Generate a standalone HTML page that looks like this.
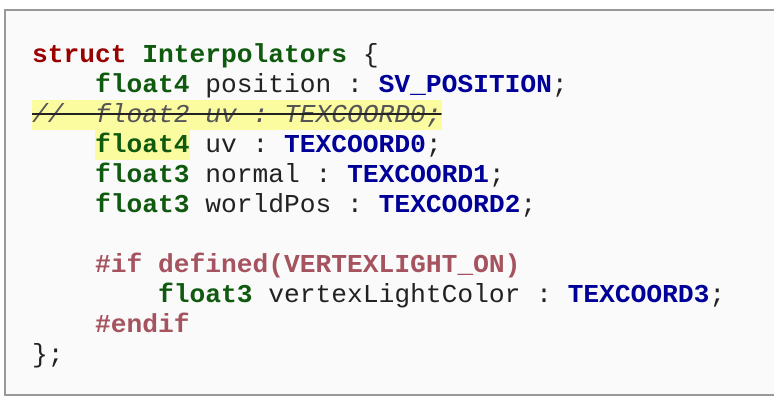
<!DOCTYPE html>
<html><head><meta charset="utf-8"><style>
html,body{margin:0;padding:0;background:#fff;width:774px;height:406px;overflow:hidden}
.box{position:absolute;left:4px;top:9px;width:790px;height:383px;border:2px solid #999;background:#fafafa}
pre{position:absolute;left:32px;top:40px;margin:0;font-family:"Liberation Mono",monospace;font-size:26.25px;line-height:30px;color:#222}
.k{color:#990000;font-weight:bold}
.t{color:#0f5a0f;font-weight:bold}
.s{color:#000099;font-weight:bold}
.p{color:#a5535f;font-weight:bold}
.c{color:#555;font-style:italic;text-decoration:line-through;text-decoration-color:#222;background:#fbfba0}
.h{background:#fbfba0}
</style></head><body>
<div class="box"></div>
<pre><span class="k">struct</span> <span class="t">Interpolators</span> {
    <span class="t">float4</span> position : <span class="s">SV_POSITION</span>;
<span class="c">//  float2 uv : TEXCOORD0;</span>
    <span class="t h">float4</span> uv : <span class="s">TEXCOORD0</span>;
    <span class="t">float3</span> normal : <span class="s">TEXCOORD1</span>;
    <span class="t">float3</span> worldPos : <span class="s">TEXCOORD2</span>;

    <span class="p">#if defined(VERTEXLIGHT_ON)</span>
        <span class="t">float3</span> vertexLightColor : <span class="s">TEXCOORD3</span>;
    <span class="p">#endif</span>
};</pre>
</body></html>
